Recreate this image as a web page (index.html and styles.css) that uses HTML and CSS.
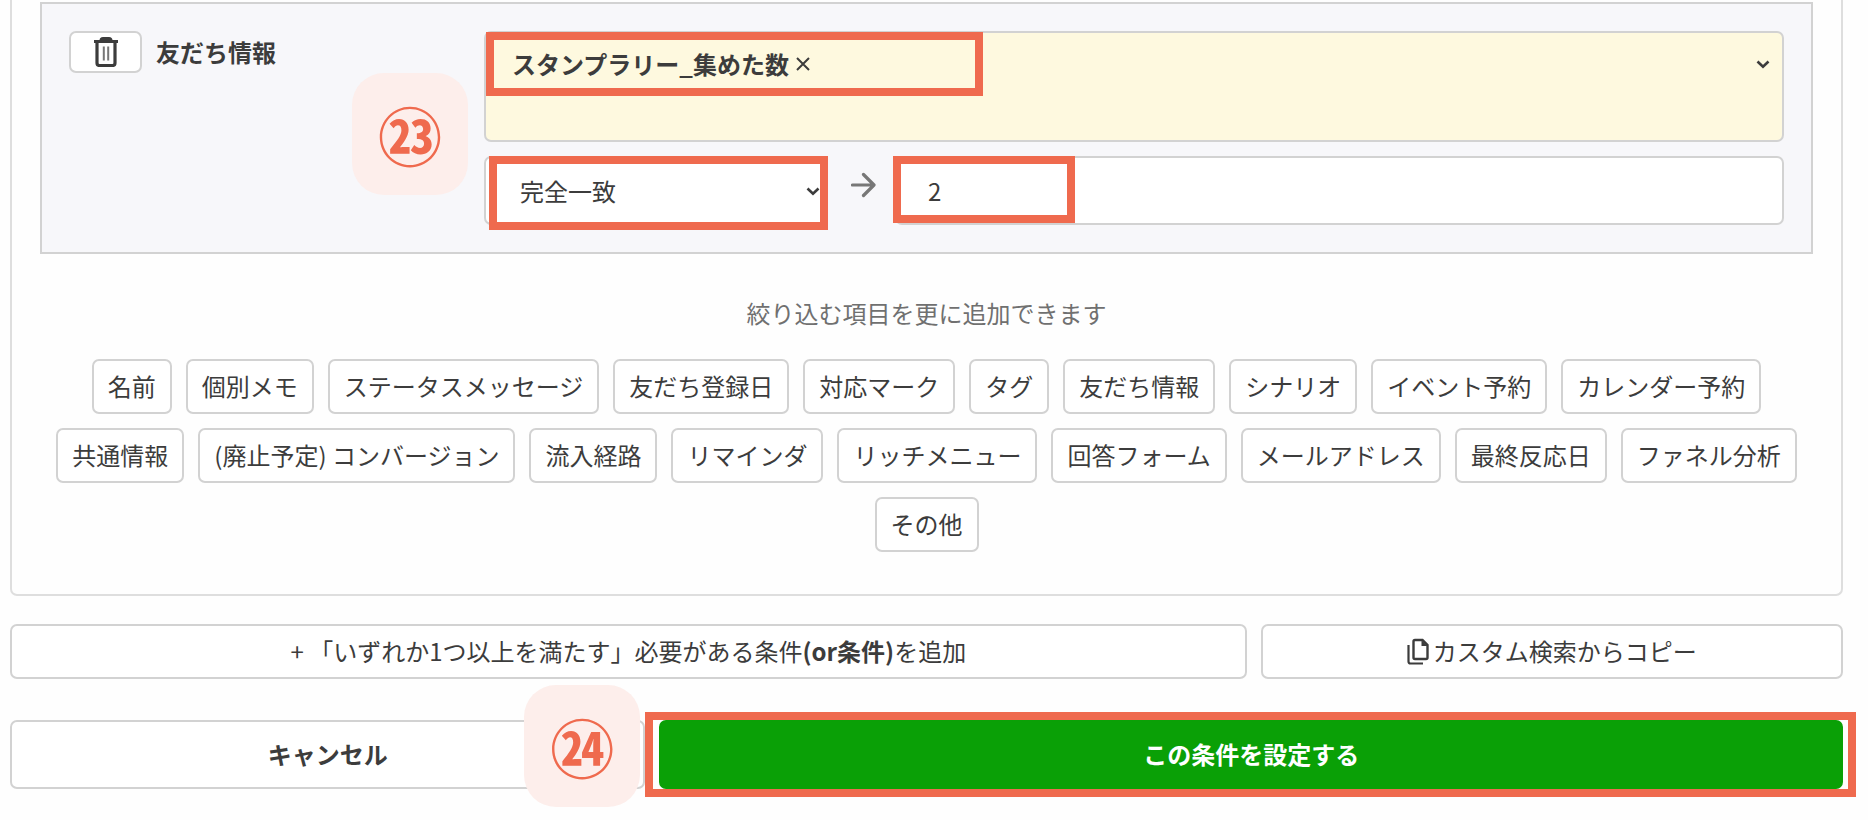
FILE: index.html
```html
<!DOCTYPE html>
<html lang="ja">
<head>
<meta charset="utf-8">
<meta name="viewport" content="width=device-width, initial-scale=1">
<title>絞り込み条件の設定</title>
<link rel="stylesheet" href="styles.css">
</head>
<body>
<main class="page">
  <section class="card">
    <div class="condition">
      <div class="condition-head">
        <button class="btn delete" type="button" aria-label="削除">
          <svg class="trash" viewBox="0 0 26 30" aria-hidden="true">
            <path d="M1 4.500h24M8 3.500q0-2 2-2h6q2 0 2 2" fill="none" stroke="currentColor" stroke-width="3"/>
            <path d="M4 5v21q0 2.500 2.500 2.500h13q2.500 0 2.500-2.500V5" fill="none" stroke="currentColor" stroke-width="3.200"/>
            <path d="M10.800 9.500v14M15.200 9.500v14" stroke="#777" stroke-width="2"/>
          </svg>
        </button>
        <label class="condition-name" for="match">友だち情報</label>
        <span class="step step-field" aria-hidden="true">㉓</span>
      </div>
      <div class="fields">
        <div class="picker">
          <span class="tag">スタンプラリー_集めた数<button class="tag-remove" type="button" aria-label="解除"><svg class="cross" viewBox="0 0 14 14" aria-hidden="true"><path d="M1 1l12 12M13 1 1 13" fill="none" stroke="currentColor" stroke-width="2"/></svg></button></span>
          <button class="picker-open" type="button" aria-label="一覧を開く">
            <svg class="chevron" viewBox="0 0 14 9" aria-hidden="true"><path d="M1.500 1.500 7 6.800l5.500-5.300" fill="none" stroke="currentColor" stroke-width="2.600"/></svg>
          </button>
          <span class="mark mark-tag"></span>
        </div>
        <div class="compare">
          <div class="select-wrap">
            <select class="control select" id="match">
              <option>完全一致</option>
              <option>部分一致</option>
            </select>
            <svg class="chevron select-chevron" viewBox="0 0 14 9" aria-hidden="true"><path d="M1.500 1.500 7 6.800l5.500-5.300" fill="none" stroke="currentColor" stroke-width="2.600"/></svg>
            <span class="mark mark-select"></span>
          </div>
          <svg class="arrow" viewBox="0 0 26 26" aria-hidden="true"><path d="M1.500 13h21M12.500 2.500 23 13 12.500 23.500" fill="none" stroke="currentColor" stroke-width="3.200" stroke-linecap="round" stroke-linejoin="round"/></svg>
          <div class="value-wrap">
            <input class="control value" type="text" value="2" aria-label="値">
            <span class="mark mark-value"></span>
          </div>
        </div>
      </div>
    </div>
    <p class="hint">絞り込む項目を更に追加できます</p>
    <div class="chips">
      <button class="btn chip" type="button">名前</button>
      <button class="btn chip" type="button">個別メモ</button>
      <button class="btn chip" type="button">ステータスメッセージ</button>
      <button class="btn chip" type="button">友だち登録日</button>
      <button class="btn chip" type="button">対応マーク</button>
      <button class="btn chip" type="button">タグ</button>
      <button class="btn chip" type="button">友だち情報</button>
      <button class="btn chip" type="button">シナリオ</button>
      <button class="btn chip" type="button">イベント予約</button>
      <button class="btn chip" type="button">カレンダー予約</button>
      <button class="btn chip" type="button">共通情報</button>
      <button class="btn chip" type="button">(廃止予定) コンバージョン</button>
      <button class="btn chip" type="button">流入経路</button>
      <button class="btn chip" type="button">リマインダ</button>
      <button class="btn chip" type="button">リッチメニュー</button>
      <button class="btn chip" type="button">回答フォーム</button>
      <button class="btn chip" type="button">メールアドレス</button>
      <button class="btn chip" type="button">最終反応日</button>
      <button class="btn chip" type="button">ファネル分析</button>
      <button class="btn chip" type="button">その他</button>
    </div>
  </section>

  <div class="row row-add">
    <button class="btn" type="button">+ 「いずれか1つ以上を満たす」必要がある条件<b>(or条件)</b>を追加</button>
    <button class="btn copy" type="button">
      <svg class="copy-icon" viewBox="0 0 22 28" aria-hidden="true">
        <path d="M1.500 8v16.500q0 2 2 2H16" fill="none" stroke="currentColor" stroke-width="2.200"/>
        <path d="M8 3h7.500L20.500 8v12.500q0 1.500-1.500 1.500H8q-1.500 0-1.500-1.500v-16Q6.500 3 8 3z" fill="none" stroke="currentColor" stroke-width="2.400"/>
        <path d="M14.500 3v6h6z" fill="currentColor"/>
      </svg>カスタム検索からコピー
    </button>
  </div>

  <div class="row row-submit">
    <div class="action">
      <button class="btn cancel" type="button">キャンセル</button>
      <span class="step step-submit" aria-hidden="true">㉔</span>
    </div>
    <div class="action">
      <button class="btn submit" type="submit">この条件を設定する</button>
      <span class="mark mark-submit"></span>
    </div>
  </div>
</main>
</body>
</html>
```
FILE: styles.css
```css
:root {
  --line: #d2d2d2;
  --ink: #3c3c3c;
  --accent: #ef6a4e;
}

* { box-sizing: border-box; }

body {
  margin: 0;
  background: #fefefe;
  color: var(--ink);
  font-family: "Noto Sans CJK JP", sans-serif;
  font-size: 24px;
  line-height: 36px;
}

button, input, select {
  font: inherit;
  color: inherit;
}

.page { padding: 0 25px 20px 10px; }

.card {
  padding: 2px 28px 42px;
  border: 2px solid #dedede;
  border-top: 0;
  border-radius: 0 0 7px 7px;
}

.btn {
  display: flex;
  align-items: center;
  justify-content: center;
  padding: 7px 14px 8px;
  border: 2px solid var(--line);
  border-radius: 7px;
  background: #fff;
  line-height: 36px;
}

.condition {
  display: flex;
  padding: 27px;
  border: 2px solid var(--line);
  background: #f7f7fa;
}

.condition-head {
  position: relative;
  display: flex;
  flex: 0 0 415px;
  align-items: flex-start;
  gap: 14px;
}

.delete {
  width: 73px;
  height: 42px;
  padding: 0;
}

.trash { width: 26px; height: 30px; }

.condition-name {
  padding-top: 3px;
  font-weight: 700;
}

.fields {
  display: flex;
  flex: 1;
  flex-direction: column;
  gap: 14px;
}

.picker {
  position: relative;
  display: flex;
  align-items: flex-start;
  justify-content: space-between;
  min-height: 111px;
  padding: 13px 12px 14px 26px;
  border: 2px solid var(--line);
  border-radius: 7px;
  background: #fef9df;
}

.tag {
  display: flex;
  align-items: center;
  font-weight: 700;
}

.tag-remove, .picker-open {
  display: flex;
  align-items: center;
  justify-content: center;
  height: 36px;
  padding: 0;
  border: 0;
  background: none;
}

.tag-remove { width: 28px; }

.cross { width: 14px; height: 14px; }

.chevron { width: 14px; height: 9px; }

.compare { display: flex; }

.select-wrap {
  position: relative;
  flex: 0 0 344px;
}

.control {
  display: block;
  width: 100%;
  height: 69px;
  border: 2px solid var(--line);
  border-radius: 7px;
  background: #fff;
}

.select {
  padding: 0 34px;
  appearance: none;
}

.select-chevron {
  position: absolute;
  top: 31px;
  right: 8px;
}

.arrow {
  flex: none;
  width: 26px;
  height: 26px;
  margin: 16px 18px 0 23px;
  color: #777;
}

.value-wrap {
  position: relative;
  flex: 1;
}

.value { padding: 0 31px; }

.hint {
  margin: 0;
  padding: 41px 0 28px;
  color: #707070;
  text-align: center;
}

.chips {
  display: flex;
  flex-wrap: wrap;
  justify-content: center;
  gap: 14px;
}

.row {
  display: grid;
  gap: 14px;
}

.row-add {
  grid-template-columns: 1236fr 582fr;
  padding-top: 28px;
}

.row-submit {
  grid-template-columns: 635fr 1183fr;
  padding-top: 41px;
}

.copy { gap: 4px; }

.copy-icon { width: 22px; height: 28px; }

.action { position: relative; }

.cancel, .submit {
  width: 100%;
  height: 69px;
  font-weight: 700;
}

.submit {
  border-color: #0aa006;
  background: #0aa006;
  color: #fff;
}

/* Numbered step badges and highlight frames over the form */
.step {
  position: absolute;
  z-index: 2;
  display: flex;
  align-items: center;
  justify-content: center;
  width: 116px;
  height: 122px;
  padding-bottom: 2px;
  border-radius: 32px;
  background: #fdeeeb;
  color: var(--accent);
  font-size: 64px;
  font-weight: 700;
  line-height: 96px;
}

.step-field { top: 42px; right: 16px; }
.step-submit { top: -35px; right: 5px; }

.mark {
  position: absolute;
  z-index: 1;
  border: 8px solid var(--accent);
  pointer-events: none;
}

.mark-tag { top: -1px; left: 0; width: 497px; height: 64px; }
.mark-select { inset: 0 0 -5px 5px; }
.mark-value { top: 0; left: -2px; width: 182px; height: 67px; }
.mark-submit { inset: -8px -13px -8px -14px; }
```
